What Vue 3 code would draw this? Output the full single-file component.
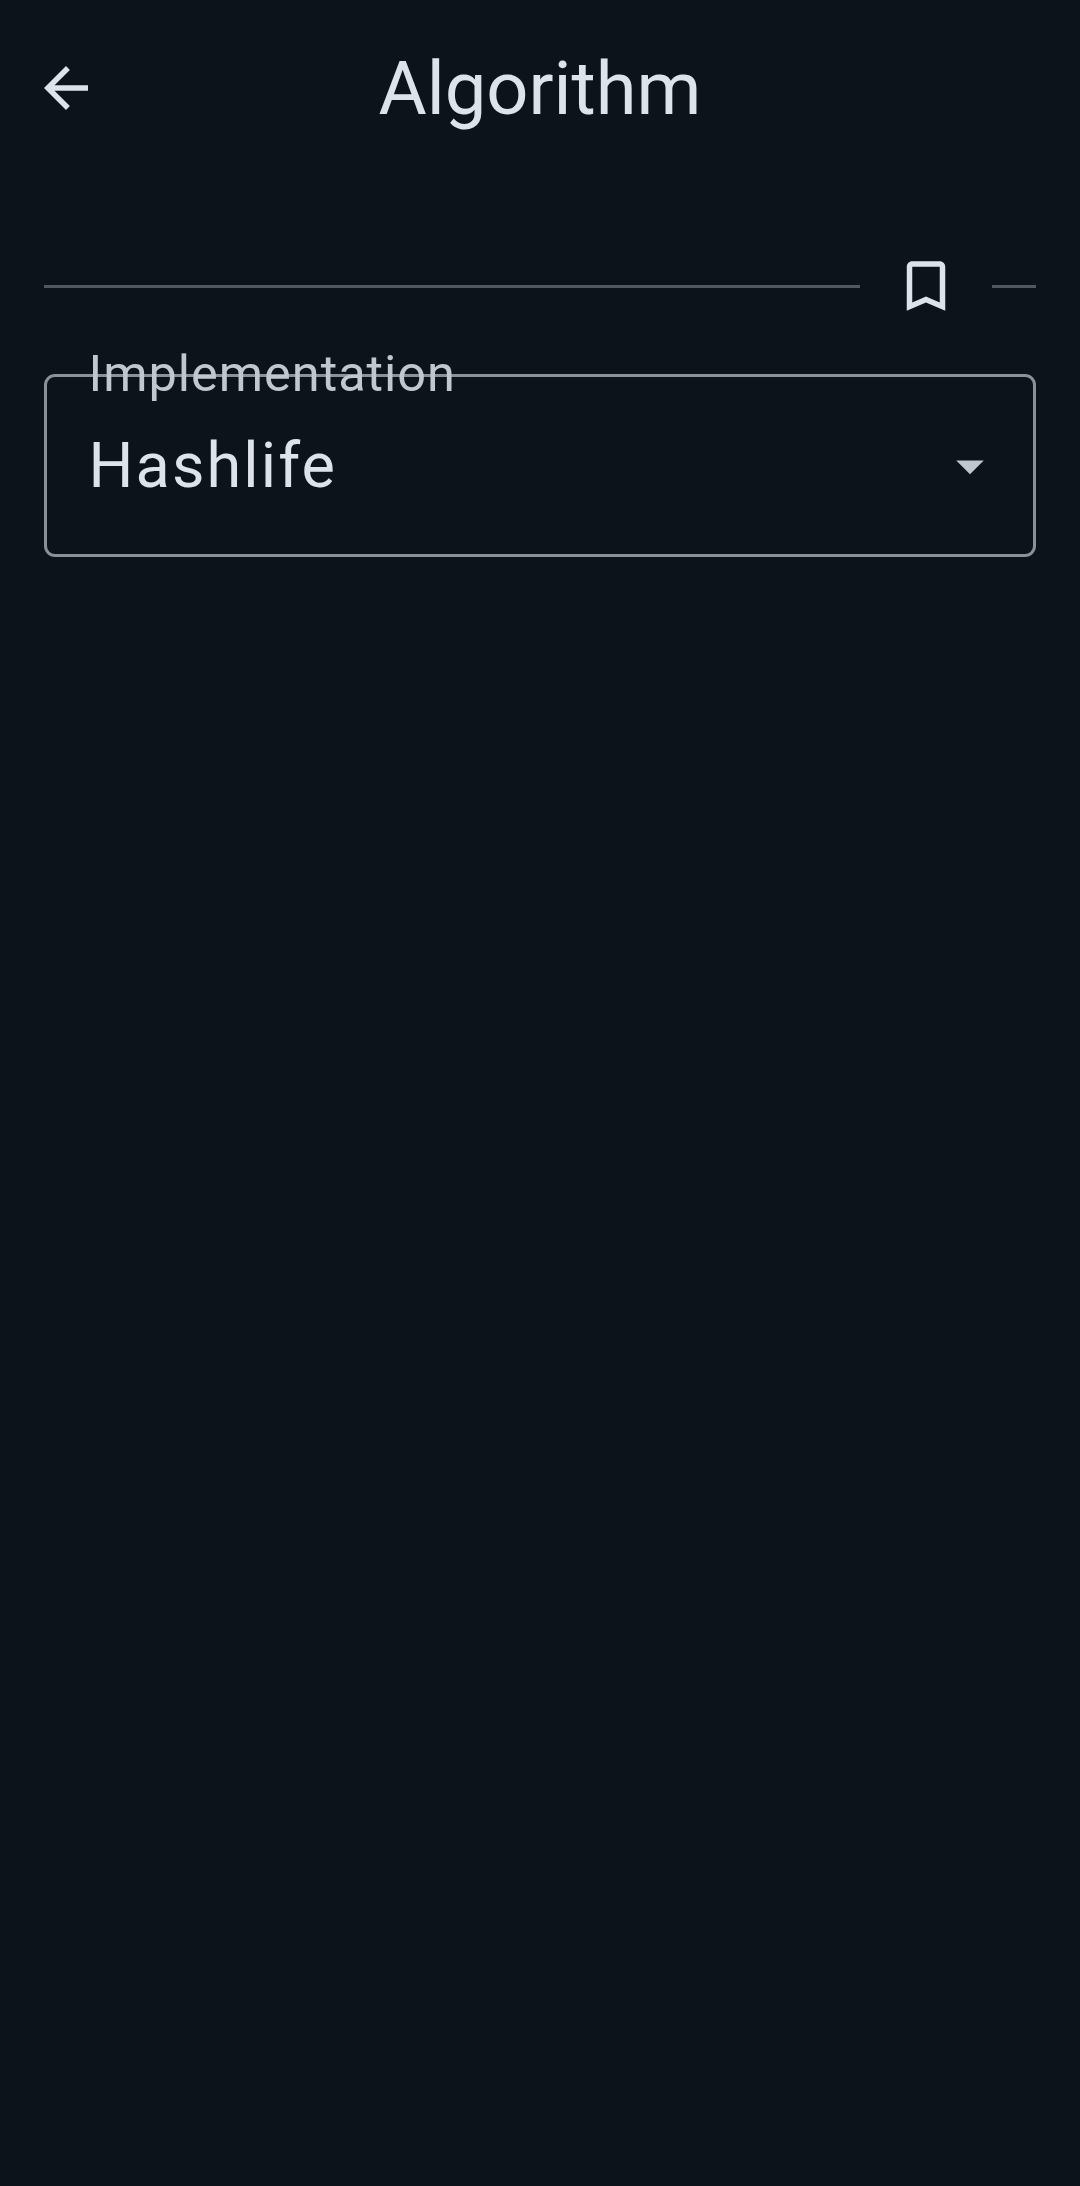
<script setup>
const title = 'Algorithm'
const field = { label: 'Implementation', value: 'Hashlife' }
</script>

<template>
  <main class="screen">
    <header class="bar">
      <button class="icon-button" aria-label="Back">
        <svg class="icon" viewBox="0 0 24 24"><path d="M20 11H7.83l5.59-5.59L12 4l-8 8 8 8 1.41-1.41L7.83 13H20v-2z" /></svg>
      </button>
      <h1 class="title">{{ title }}</h1>
      <span class="spacer"></span>
    </header>
    <div class="divider">
      <span class="line grow"></span>
      <button class="icon-button bookmark" aria-label="Bookmark">
        <svg class="icon" viewBox="0 0 24 24"><path d="M17 3H7c-1.100 0-1.990.9-1.990 2L5 21l7-3 7 3V5c0-1.100-.9-2-2-2zm0 15-5-2.180L7 18V5h10v13z" /></svg>
      </button>
      <span class="line end"></span>
    </div>
    <div class="select">
      <span class="label">{{ field.label }}</span>
      <span class="value">{{ field.value }}</span>
      <svg class="icon caret" viewBox="0 0 24 24"><path d="M7 10l5 5 5-5z" /></svg>
    </div>
  </main>
</template>

<style>
body { background: #0c131a; }
</style>

<style scoped>
.screen {
  box-sizing: border-box;
  min-height: 2186px;
  background: #0c131a;
  color: #dde3ea;
  font-family: Roboto, "Noto Sans", sans-serif;
}
.bar {
  display: flex;
  align-items: center;
  height: 176px;
}
.icon-button {
  display: flex;
  align-items: center;
  justify-content: center;
  flex: none;
  width: 132px;
  height: 132px;
  padding: 0;
  border: 0;
  background: none;
  color: inherit;
}
.icon {
  display: block;
  flex: none;
  width: 66px;
  height: 66px;
  fill: currentColor;
}
.title {
  flex: 1;
  margin: 2px 0 0;
  text-align: center;
  font-size: 74px;
  font-weight: 400;
  line-height: 88px;
}
.spacer { width: 132px; }
.divider {
  display: flex;
  align-items: center;
  height: 132px;
  margin: 44px 44px 0;
}
.line {
  height: 3px;
  margin-top: 1px;
  background: #50575e;
}
.grow { flex: 1; }
.end { width: 44px; }
.select {
  position: relative;
  box-sizing: border-box;
  display: flex;
  align-items: center;
  justify-content: space-between;
  height: 183px;
  margin: 22px 44px 0;
  padding: 0 30px 0 41.5px;
  border: 3px solid #8a9199;
  border-radius: 11px;
}
.label {
  position: absolute;
  left: 41.5px;
  top: -33px;
  color: #c0c7cf;
  font-size: 50.5px;
  line-height: 60px;
  letter-spacing: 0.97px;
}
.value {
  font-size: 63px;
  line-height: 76px;
  letter-spacing: 2.1px;
}
.caret { color: #c0c7cf; }
</style>
